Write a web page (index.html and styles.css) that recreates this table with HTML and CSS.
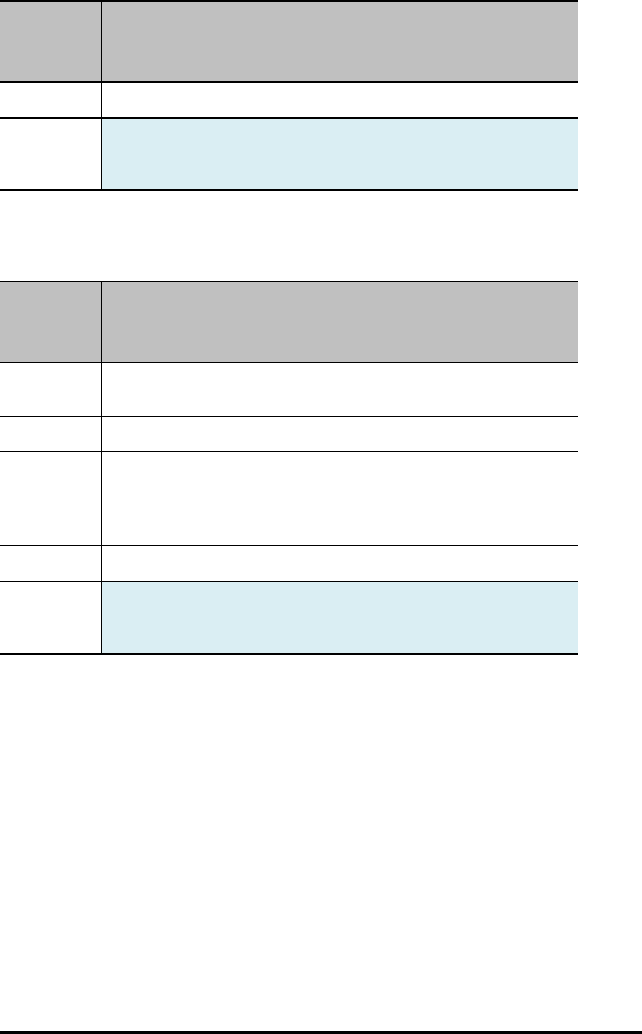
FILE: index.html
```html
<!DOCTYPE html>
<html lang="en">
<head>
<meta charset="utf-8">
<title>Tables</title>
<link rel="stylesheet" href="styles.css">
</head>
<body>
<div class="page">
  <div class="grid grid-one">
    <div class="cell key head"></div><div class="cell val head"></div>
    <div class="cell key"></div><div class="cell val"></div>
    <div class="cell key last"></div><div class="cell val blue last"></div>
  </div>
  <div class="grid grid-two">
    <div class="cell key head"></div><div class="cell val head"></div>
    <div class="cell key"></div><div class="cell val"></div>
    <div class="cell key"></div><div class="cell val"></div>
    <div class="cell key"></div><div class="cell val"></div>
    <div class="cell key"></div><div class="cell val"></div>
    <div class="cell key last"></div><div class="cell val blue last"></div>
  </div>
  <div class="footer-rule"></div>
</div>
</body>
</html>
```

FILE: styles.css
```css
html, body {
  margin: 0;
  padding: 0;
  background: #ffffff;
  font-family: "Liberation Serif", serif;
}

.page {
  display: flex;
  flex-direction: column;
  min-height: 1034px;
}

.grid {
  display: grid;
  width: 578px;
  grid-template-columns: 102px 476px;
}

.grid-one {
  border-top: 2px solid #000;
  grid-template-rows: 81px 36px 72px;
}

.grid-one .cell {
  border-bottom: 2px solid #000;
}

.grid-two {
  margin-top: 90px;
  border-top: 1px solid #000;
  grid-template-rows: 81px 54px 35px 94px 36px 73px;
}

.grid-two .cell {
  border-bottom: 1px solid #000;
}

.grid-two .cell.last {
  border-bottom: 2px solid #000;
}

.cell {
  box-sizing: border-box;
}

.key {
  border-right: 1px solid #000;
}

.head {
  background: #c0c0c0;
}

.blue {
  background: #daeef3;
}

.footer-rule {
  margin-top: auto;
  margin-bottom: 0;
  height: 3px;
  background: #000;
  width: 100%;
}
```
